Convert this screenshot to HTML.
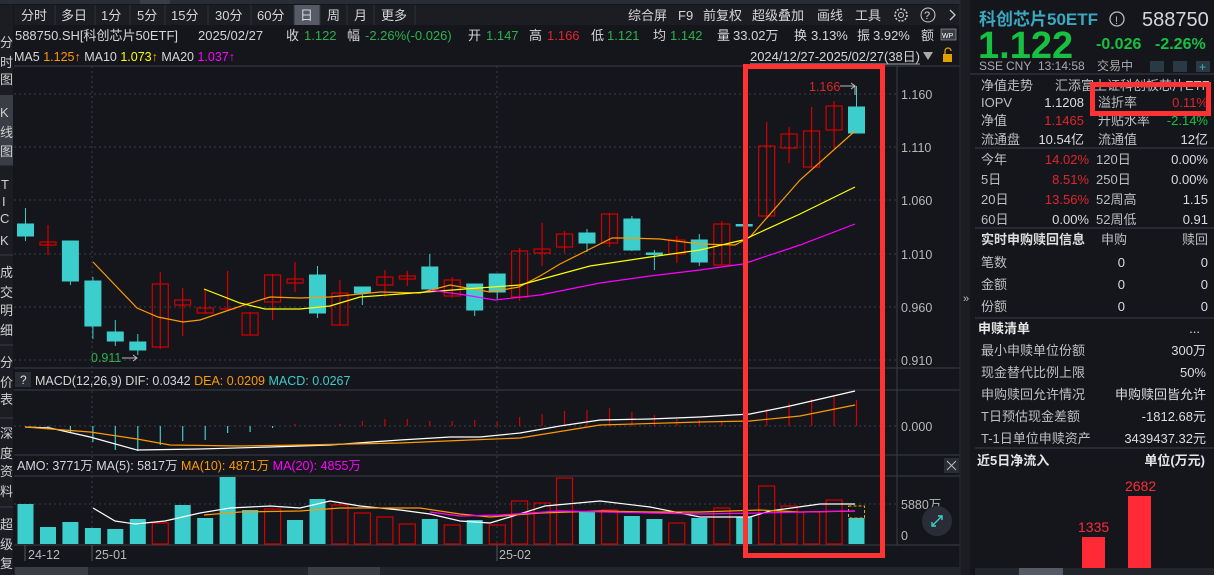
<!DOCTYPE html>
<html><head><meta charset="utf-8"><style>
html,body{margin:0;padding:0;background:#14161c;width:1214px;height:575px;overflow:hidden}
svg{display:block;font-family:"Liberation Sans","Noto Sans CJK SC",sans-serif}
</style></head><body>
<svg width="1214" height="575" viewBox="0 0 1214 575" xmlns="http://www.w3.org/2000/svg">
<rect width="1214" height="575" fill="#14161c"/>
<rect x="0" y="0" width="960" height="4" fill="#2a2d35"/>
<rect x="140" y="0" width="30" height="4" fill="#3a3e47"/>
<g font-size="13" fill="#d6d6d6">
<rect x="14" y="5" width="946" height="20" fill="#1b1d23"/>
<rect x="294" y="5" width="26" height="20" fill="#555a66"/>
<g stroke="#2f323a"><line x1="55" y1="5" x2="55" y2="25"/><line x1="95" y1="5" x2="95" y2="25"/><line x1="130" y1="5" x2="130" y2="25"/><line x1="165" y1="5" x2="165" y2="25"/><line x1="208" y1="5" x2="208" y2="25"/><line x1="251" y1="5" x2="251" y2="25"/><line x1="294" y1="5" x2="294" y2="25"/><line x1="320" y1="5" x2="320" y2="25"/><line x1="347" y1="5" x2="347" y2="25"/><line x1="374" y1="5" x2="374" y2="25"/><line x1="415" y1="5" x2="415" y2="25"/></g>
<text x="21" y="20">分时</text><text x="61" y="20">多日</text><text x="101" y="20">1分</text><text x="137" y="20">5分</text><text x="171" y="20">15分</text><text x="215" y="20">30分</text><text x="257" y="20">60分</text><text x="300" y="20">日</text><text x="327" y="20">周</text><text x="354" y="20">月</text><text x="381" y="20">更多</text>
<text x="628" y="20">综合屏</text><text x="678" y="20">F9</text><text x="703" y="20">前复权</text><text x="752" y="20">超级叠加</text><text x="817" y="20">画线</text><text x="855" y="20">工具</text>
<circle cx="901" cy="15" r="6" fill="none" stroke="#ccc" stroke-width="1.6" stroke-dasharray="2 1.4"/><circle cx="901" cy="15" r="2.5" fill="none" stroke="#ccc"/>
<circle cx="928" cy="15" r="7" fill="none" stroke="#ccc"/><text x="924" y="19" font-size="11">?</text>
<path d="M950 10 L955 15 L950 20" fill="none" stroke="#ccc" stroke-width="1.3"/>
</g>
<rect x="0" y="5" width="13" height="570" fill="#1b1d23"/>
<rect x="0" y="95" width="13" height="70" fill="#3a3d45"/>
<g stroke="#3a3d45"><line x1="0" y1="165" x2="13" y2="165"/><line x1="0" y1="255" x2="13" y2="255"/><line x1="0" y1="345" x2="13" y2="345"/><line x1="0" y1="418" x2="13" y2="418"/><line x1="0" y1="507" x2="13" y2="507"/></g>
<g font-size="13" fill="#cfcfcf">
<text x="0" y="47">分</text><text x="0" y="67">时</text><text x="0" y="84">图</text>
<text x="0" y="117">K</text><text x="0" y="137">线</text><text x="0" y="156">图</text>
<text x="1" y="189">T</text><text x="2" y="206">I</text><text x="0" y="223">C</text><text x="0" y="245">K</text>
<text x="0" y="277">成</text><text x="0" y="297">交</text><text x="0" y="315">明</text><text x="0" y="335">细</text>
<text x="0" y="367">分</text><text x="0" y="387">价</text><text x="0" y="404">表</text>
<text x="0" y="438">深</text><text x="0" y="458">度</text><text x="0" y="476">资</text><text x="0" y="496">料</text>
<text x="0" y="529">超</text><text x="0" y="549">级</text><text x="0" y="568">复</text>
</g>
<g font-size="13">
<text x="15" y="40" fill="#d6d6d6" textLength="163" lengthAdjust="spacingAndGlyphs">588750.SH[科创芯片50ETF]</text>
<text x="198" y="40" fill="#d6d6d6">2025/02/27</text>
<text x="248" y="40"><tspan fill="#d6d6d6" x="286">收</tspan><tspan fill="#2bb24c" x="304">1.122</tspan><tspan fill="#d6d6d6" x="347">幅</tspan><tspan fill="#2bb24c" x="365">-2.26%(-0.026)</tspan><tspan fill="#d6d6d6" x="468">开</tspan><tspan fill="#2bb24c" x="486">1.147</tspan><tspan fill="#d6d6d6" x="529">高</tspan><tspan fill="#e0242c" x="547">1.166</tspan><tspan fill="#d6d6d6" x="591">低</tspan><tspan fill="#2bb24c" x="607">1.121</tspan><tspan fill="#d6d6d6" x="653">均</tspan><tspan fill="#2bb24c" x="670">1.142</tspan><tspan fill="#d6d6d6" x="717">量</tspan><tspan fill="#d6d6d6" x="733">33.02万</tspan><tspan fill="#d6d6d6" x="794">换</tspan><tspan fill="#d6d6d6" x="811">3.13%</tspan><tspan fill="#d6d6d6" x="857">振</tspan><tspan fill="#d6d6d6" x="873">3.92%</tspan><tspan fill="#d6d6d6" x="921">额</tspan></text>
<rect x="941" y="29" width="15" height="11" fill="#3a3d45" stroke="#aaa" stroke-width=".6"/><text x="942" y="38" font-size="7" fill="#fff">WP</text>
<text x="14" y="61" font-size="12.5"><tspan fill="#d6d6d6">MA5 </tspan><tspan fill="#ff9900">1.125↑</tspan><tspan fill="#d6d6d6"> MA10 </tspan><tspan fill="#ffff00">1.073</tspan><tspan fill="#ff9900">↑</tspan><tspan fill="#d6d6d6"> MA20 </tspan><tspan fill="#ff00ff">1.037↑</tspan></text>
<text x="750" y="61" font-size="12.5" fill="#d6d6d6" textLength="170" lengthAdjust="spacingAndGlyphs">2024/12/27-2025/02/27(38日)</text>
<line x1="750" y1="64" x2="920" y2="64" stroke="#d6d6d6" stroke-width=".8"/>
<path d="M923 52 L933 52 L928 60Z" fill="#aaa"/>
<rect x="943" y="54" width="9" height="8" fill="#e0a000"/><path d="M945 54 V51 A3 3 0 0 1 951 51" fill="none" stroke="#e0a000" stroke-width="1.3"/>
</g>
<g stroke="#3a3d45" fill="none">
<line x1="14" y1="66" x2="960" y2="66"/>
<line x1="14" y1="368" x2="960" y2="368"/>
<line x1="14" y1="390" x2="960" y2="390"/>
<line x1="14" y1="455" x2="960" y2="455"/>
<line x1="14" y1="476" x2="960" y2="476"/>
<line x1="14" y1="545" x2="960" y2="545"/>
<line x1="897" y1="66" x2="897" y2="545"/>
<line x1="960" y1="0" x2="960" y2="575" stroke="#2a2d35"/>
</g>
<g stroke="#3c3f47" stroke-dasharray="2 3">
<line x1="14" y1="94" x2="897" y2="94"/><line x1="14" y1="147" x2="897" y2="147"/><line x1="14" y1="200" x2="897" y2="200"/><line x1="14" y1="254" x2="897" y2="254"/><line x1="14" y1="307" x2="897" y2="307"/><line x1="14" y1="360" x2="897" y2="360"/>
<line x1="14" y1="426" x2="897" y2="426"/><line x1="14" y1="504" x2="897" y2="504"/>
<line x1="92" y1="66" x2="92" y2="545"/><line x1="497" y1="66" x2="497" y2="545"/>
</g>
<g font-size="12.5" fill="#b8b8b8">
<text x="901" y="99">1.160</text><text x="901" y="152">1.110</text><text x="901" y="205">1.060</text><text x="901" y="259">1.010</text><text x="901" y="312">0.960</text><text x="901" y="365">0.910</text>
<text x="901" y="431">0.000</text><text x="901" y="509">5880万</text><text x="901" y="540">0</text>
</g>
<g stroke="#3ccdcd" fill="#3ccdcd">
<line x1="25.5" y1="208" x2="25.5" y2="241"/><rect x="17.5" y="224" width="16" height="12"/>
<line x1="70.4" y1="241" x2="70.4" y2="285"/><rect x="62.4" y="241" width="16" height="40"/>
<line x1="92.9" y1="277" x2="92.9" y2="339"/><rect x="84.9" y="281" width="16" height="45"/>
<line x1="115.3" y1="320" x2="115.3" y2="346"/><rect x="107.3" y="332" width="16" height="9"/>
<line x1="137.8" y1="334" x2="137.8" y2="355"/><rect x="129.8" y="342" width="16" height="8"/>
<line x1="317.5" y1="266" x2="317.5" y2="318"/><rect x="309.5" y="275" width="16" height="38"/>
<line x1="362.4" y1="287" x2="362.4" y2="305"/><rect x="354.4" y="287" width="16" height="6"/>
<line x1="429.8" y1="254" x2="429.8" y2="290"/><rect x="421.8" y="267" width="16" height="22"/>
<line x1="474.7" y1="284" x2="474.7" y2="316"/><rect x="466.7" y="284" width="16" height="26"/>
<line x1="497.2" y1="274" x2="497.2" y2="300"/><rect x="489.2" y="274" width="16" height="18"/>
<line x1="587" y1="229" x2="587" y2="252"/><rect x="579" y="233" width="16" height="10"/>
<line x1="631.9" y1="216" x2="631.9" y2="251"/><rect x="623.9" y="219" width="16" height="31"/>
<line x1="654.4" y1="250" x2="654.4" y2="270"/><rect x="646.4" y="253" width="16" height="1.5"/>
<line x1="699.3" y1="234" x2="699.3" y2="266"/><rect x="691.3" y="240" width="16" height="22"/>
<rect x="736.2" y="224.5" width="16" height="1.5"/>
<line x1="856.5" y1="86" x2="856.5" y2="107"/><rect x="848.5" y="107" width="16" height="26"/>
</g>
<g stroke="#d40000" fill="none" stroke-width="1.2">
<line x1="48" y1="225" x2="48" y2="255"/><rect x="40" y="242" width="16" height="3"/>
<line x1="160.3" y1="272" x2="160.3" y2="349"/><rect x="152.3" y="284" width="16" height="63"/>
<line x1="182.7" y1="288" x2="182.7" y2="336"/><rect x="174.7" y="300" width="16" height="5"/>
<line x1="205.2" y1="290" x2="205.2" y2="314"/><rect x="197.2" y="308" width="16" height="5"/>
<line x1="227.6" y1="271" x2="227.6" y2="310"/><line x1="219.6" y1="309" x2="235.6" y2="309"/>
<line x1="250.1" y1="312" x2="250.1" y2="335"/><rect x="242.1" y="313" width="16" height="22"/>
<line x1="272.6" y1="274" x2="272.6" y2="320"/><rect x="264.6" y="275" width="16" height="27"/>
<line x1="295" y1="262" x2="295" y2="292"/><rect x="287" y="279" width="16" height="4"/>
<line x1="339.9" y1="280" x2="339.9" y2="325"/><rect x="331.9" y="293" width="16" height="32"/>
<line x1="384.9" y1="270" x2="384.9" y2="297"/><rect x="376.9" y="277" width="16" height="8"/>
<line x1="407.3" y1="271" x2="407.3" y2="286"/><rect x="399.3" y="276" width="16" height="3"/>
<line x1="452.2" y1="277" x2="452.2" y2="298"/><rect x="444.2" y="280" width="16" height="16"/>
<line x1="519.6" y1="248" x2="519.6" y2="301"/><rect x="511.6" y="251" width="16" height="46"/>
<line x1="542.1" y1="223" x2="542.1" y2="266"/><rect x="534.1" y="249" width="16" height="4"/>
<line x1="564.5" y1="231" x2="564.5" y2="253"/><rect x="556.5" y="234" width="16" height="13"/>
<line x1="609.5" y1="213" x2="609.5" y2="247"/><rect x="601.5" y="214" width="16" height="29"/>
<line x1="676.8" y1="236" x2="676.8" y2="263"/><rect x="668.8" y="240" width="16" height="14"/>
<line x1="721.8" y1="221" x2="721.8" y2="265"/><rect x="713.8" y="224" width="16" height="41"/>
<line x1="766.7" y1="122" x2="766.7" y2="216"/><rect x="758.7" y="146" width="16" height="70"/>
<line x1="789.1" y1="127" x2="789.1" y2="163"/><rect x="781.1" y="134" width="16" height="14"/>
<line x1="811.6" y1="107" x2="811.6" y2="167"/><rect x="803.6" y="131" width="16" height="36"/>
<line x1="834.1" y1="101" x2="834.1" y2="148"/><rect x="826.1" y="106" width="16" height="24"/>
</g>
<g fill="none" stroke-width="1.2">
<polyline stroke="#ff9900" points="93,262 137,308 158,317 183,322 200,320 244,305 270,297 300,298 330,297 380,292 420,293 450,285 490,292 519,287 540,276 560,264 590,249 612,238 625,238 660,239 700,244 735,245 750,237 800,180 855,131"/>
<polyline stroke="#ffff00" points="204,289 240,303 265,309 300,309 330,306 360,297 400,294 440,291 465,289 520,285 590,266 650,257 700,250 743,240 800,214 855,187"/>
<polyline stroke="#ff00ff" points="430,290 465,295 495,300 540,295 600,283 650,276 700,270 743,264 800,245 855,224"/>
</g>
<text x="91" y="362" font-size="12.5" fill="#2bb24c">0.911</text>
<path d="M122 358 H137 M133 355 L137 358 L133 361" stroke="#bbb" fill="none"/>
<text x="809" y="91" font-size="12.5" fill="#e0242c">1.166</text>
<path d="M840 86 H855 V95 M851 83 L855 86 L851 89" stroke="#bbb" fill="none"/>
<rect x="15" y="372" width="16" height="15" fill="#2a2d35"/><text x="20" y="384" font-size="12" fill="#ddd">?</text>
<text x="35" y="385" font-size="12.5"><tspan fill="#d6d6d6">MACD(12,26,9)  DIF: 0.0342  </tspan><tspan fill="#ff9900">DEA: 0.0209  </tspan><tspan fill="#3ccdcd">MACD: 0.0267</tspan></text>
<g stroke="#3ccdcd" stroke-width="1.2">
<line x1="48" y1="426" x2="48" y2="428"/><line x1="70.4" y1="426" x2="70.4" y2="432"/><line x1="92.9" y1="426" x2="92.9" y2="442"/><line x1="115.3" y1="426" x2="115.3" y2="450"/><line x1="137.8" y1="426" x2="137.8" y2="451"/><line x1="160.3" y1="426" x2="160.3" y2="445"/><line x1="182.7" y1="426" x2="182.7" y2="441"/><line x1="205.2" y1="426" x2="205.2" y2="440"/><line x1="227.6" y1="426" x2="227.6" y2="433"/><line x1="250.1" y1="426" x2="250.1" y2="432"/><line x1="272.6" y1="426" x2="272.6" y2="428"/>
</g>
<g stroke="#d40000" stroke-width="1.2">
<line x1="295" y1="426" x2="295" y2="424"/><line x1="339.9" y1="426" x2="339.9" y2="424"/><line x1="362.4" y1="426" x2="362.4" y2="421"/><line x1="384.9" y1="426" x2="384.9" y2="419"/><line x1="407.3" y1="426" x2="407.3" y2="419"/><line x1="429.8" y1="426" x2="429.8" y2="421"/><line x1="452.2" y1="426" x2="452.2" y2="421"/><line x1="474.7" y1="426" x2="474.7" y2="420"/><line x1="497.2" y1="426" x2="497.2" y2="422"/><line x1="519.6" y1="426" x2="519.6" y2="417"/><line x1="542.1" y1="426" x2="542.1" y2="414"/><line x1="564.5" y1="426" x2="564.5" y2="411"/><line x1="587" y1="426" x2="587" y2="410"/><line x1="609.5" y1="426" x2="609.5" y2="408"/><line x1="631.9" y1="426" x2="631.9" y2="412"/><line x1="654.4" y1="426" x2="654.4" y2="415"/><line x1="676.8" y1="426" x2="676.8" y2="419"/><line x1="699.3" y1="426" x2="699.3" y2="420"/><line x1="721.8" y1="426" x2="721.8" y2="421"/><line x1="766.7" y1="426" x2="766.7" y2="409"/><line x1="789.1" y1="426" x2="789.1" y2="403"/><line x1="811.6" y1="426" x2="811.6" y2="399"/><line x1="834.1" y1="426" x2="834.1" y2="396"/><line x1="856.5" y1="426" x2="856.5" y2="400"/>
</g>
<polyline fill="none" stroke="#ffffff" stroke-width="1.2" points="25,427 50,428 90,437 137,450 200,449 270,447 330,445 400,440 450,437 480,437 520,433 560,426 600,420 650,419 700,417 750,414 790,406 855,391"/>
<polyline fill="none" stroke="#ff9900" stroke-width="1.2" points="25,427 90,432 137,439 170,445 240,446 300,445 400,443 470,440 520,438 600,425 700,422 750,421 800,416 855,405"/>
<text x="17" y="470" font-size="12.5"><tspan fill="#d6d6d6">AMO: 3771万  MA(5): 5817万  </tspan><tspan fill="#ff9900">MA(10): 4871万  </tspan><tspan fill="#ff00ff">MA(20): 4855万</tspan></text>
<rect x="944" y="458" width="15" height="15" fill="#2a2d35"/><path d="M947 461 L956 470 M956 461 L947 470" stroke="#bbb"/>
<g fill="#3ccdcd">
<rect x="17.5" y="504" width="16" height="40"/><rect x="40" y="527" width="16" height="17"/><rect x="62.4" y="522" width="16" height="22"/><rect x="84.9" y="528" width="16" height="16"/><rect x="107.3" y="529" width="16" height="15"/><rect x="129.8" y="519" width="16" height="25"/><rect x="174.7" y="505" width="16" height="39"/><rect x="197.2" y="518" width="16" height="26"/><rect x="219.6" y="477" width="16" height="67"/><rect x="242.1" y="510" width="16" height="34"/><rect x="287" y="520" width="16" height="24"/><rect x="309.5" y="499" width="16" height="45"/><rect x="421.8" y="519" width="16" height="25"/><rect x="466.7" y="520" width="16" height="24"/><rect x="579" y="511" width="16" height="33"/><rect x="623.9" y="516" width="16" height="28"/><rect x="646.4" y="519" width="16" height="25"/><rect x="691.3" y="518" width="16" height="26"/><rect x="736.2" y="517" width="16" height="27"/><rect x="848.5" y="518" width="16" height="26"/>
</g>
<g fill="none" stroke="#d40000" stroke-width="1.2">
<rect x="152.3" y="523" width="16" height="21"/><rect x="264.6" y="509" width="16" height="35"/><rect x="331.9" y="505" width="16" height="39"/><rect x="354.4" y="513" width="16" height="31"/><rect x="376.9" y="517" width="16" height="27"/><rect x="399.3" y="524" width="16" height="20"/><rect x="444.2" y="525" width="16" height="19"/><rect x="489.2" y="525" width="16" height="19"/><rect x="511.6" y="501" width="16" height="43"/><rect x="534.1" y="503" width="16" height="41"/><rect x="556.5" y="478" width="16" height="66"/><rect x="601.5" y="510" width="16" height="34"/><rect x="668.8" y="523" width="16" height="21"/><rect x="713.8" y="508" width="16" height="36"/><rect x="758.7" y="486" width="16" height="58"/><rect x="781.1" y="506" width="16" height="38"/><rect x="803.6" y="512" width="16" height="32"/><rect x="826.1" y="500" width="16" height="44"/>
</g>
<rect x="848.5" y="506" width="16" height="12" fill="none" stroke="#e0b000" stroke-dasharray="3 2"/>
<polyline fill="none" stroke="#ffffff" stroke-width="1.2" points="93,508 115,521 135,524 165,521 200,513 230,508 270,506 300,508 330,501 360,506 400,510 430,514 460,521 490,523 510,517 545,506 600,501 650,507 700,517 750,517 770,511 820,504 855,504"/>
<polyline fill="none" stroke="#ff9900" stroke-width="1.2" points="204,515 240,512 300,511 340,508 380,508 420,508 460,514 490,517 540,513 600,511 650,512 700,512 760,510 800,512 855,511"/>
<polyline fill="none" stroke="#ff00ff" stroke-width="1.2" points="430,512 460,516 500,515 560,511 700,514 760,513 855,511"/>
<circle cx="937" cy="521" r="15" fill="#2a2d35"/><path d="M932 526 L942 516 M938 516 H942 V520 M932 522 V526 H936" stroke="#3ccdcd" fill="none" stroke-width="1.4"/>
<g stroke="#555"><line x1="25" y1="545" x2="25" y2="561"/><line x1="92" y1="545" x2="92" y2="561"/><line x1="497" y1="545" x2="497" y2="561"/></g>
<g font-size="12.5" fill="#b8b8b8"><text x="28" y="559">24-12</text><text x="95" y="559">25-01</text><text x="499" y="559">25-02</text></g>
<rect x="14" y="567" width="946" height="8" fill="#23252c"/><rect x="15" y="567" width="73" height="8" fill="#3a3d45"/><rect x="308" y="567" width="72" height="8" fill="#3a3d45"/>
<rect x="745.5" y="66.5" width="137" height="489" fill="none" stroke="#ff3333" stroke-width="5"/>
<rect x="961" y="0" width="9" height="575" fill="#1b1d23"/>
<text x="963" y="302" font-size="11" fill="#bbb">»</text>
<text x="979" y="25" font-size="17" font-weight="bold" fill="#3aa8c0">科创芯片50ETF</text>
<circle cx="1117" cy="19" r="7" fill="none" stroke="#bbb" stroke-width="1.3"/><text x="1115" y="24" font-size="11" fill="#bbb">!</text>
<text x="1142" y="26" font-size="20" fill="#d6d6d6">588750</text>
<text x="978" y="58" font-size="38" font-weight="bold" fill="#17c040">1.122</text>
<text x="1096" y="49" font-size="16" font-weight="bold" fill="#17c040">-0.026</text>
<text x="1155" y="49" font-size="16" font-weight="bold" fill="#17c040">-2.26%</text>
<g font-size="12" fill="#aaa"><text x="979" y="70">SSE</text><text x="1006" y="70">CNY</text><text x="1038" y="70">13:14:58</text><text x="1097" y="70">交易中</text></g>
<rect x="1150" y="61" width="14" height="11" fill="#2a3a44"/><rect x="1173" y="61" width="14" height="11" fill="#2a3a44"/><rect x="1196" y="61" width="14" height="11" fill="#2a3a44"/>
<text x="1199" y="71" font-size="12" fill="#3ab0c0">+</text>
<g stroke="#3a3d45"><line x1="970" y1="74" x2="1214" y2="74"/><line x1="975" y1="148" x2="1214" y2="148"/><line x1="975" y1="228" x2="1214" y2="228"/><line x1="975" y1="318" x2="1214" y2="318"/><line x1="975" y1="448" x2="1214" y2="448"/></g>
<g font-size="13" fill="#bfbfbf">
<text x="981" y="90">净值走势</text><text x="1055" y="90">汇添富上证科创板芯片ETF</text>
<text x="981" y="107">IOPV</text><text x="1084" y="107" text-anchor="end" fill="#ddd">1.1208</text><text x="1098" y="107">溢折率</text><text x="1208" y="107" text-anchor="end" fill="#e0242c">0.11%</text>
<text x="981" y="125">净值</text><text x="1084" y="125" text-anchor="end" fill="#e0242c">1.1465</text><text x="1098" y="125">升贴水率</text><text x="1208" y="125" text-anchor="end" fill="#17c040">-2.14%</text>
<text x="981" y="144">流通盘</text><text x="1084" y="144" text-anchor="end" fill="#ddd">10.54亿</text><text x="1098" y="144">流通值</text><text x="1208" y="144" text-anchor="end" fill="#ddd">12亿</text>
<text x="981" y="164">今年</text><text x="1089" y="164" text-anchor="end" fill="#e0242c">14.02%</text><text x="1096" y="164">120日</text><text x="1208" y="164" text-anchor="end" fill="#ddd">0.00%</text>
<text x="981" y="184">5日</text><text x="1089" y="184" text-anchor="end" fill="#e0242c">8.51%</text><text x="1096" y="184">250日</text><text x="1208" y="184" text-anchor="end" fill="#ddd">0.00%</text>
<text x="981" y="204">20日</text><text x="1089" y="204" text-anchor="end" fill="#e0242c">13.56%</text><text x="1096" y="204">52周高</text><text x="1208" y="204" text-anchor="end" fill="#ddd">1.15</text>
<text x="981" y="224">60日</text><text x="1089" y="224" text-anchor="end" fill="#ddd">0.00%</text><text x="1096" y="224">52周低</text><text x="1208" y="224" text-anchor="end" fill="#ddd">0.91</text>
<text x="981" y="244" font-weight="bold" fill="#ddd">实时申购赎回信息</text><text x="1101" y="244">申购</text><text x="1208" y="244" text-anchor="end">赎回</text>
<text x="981" y="267">笔数</text><text x="1125" y="267" text-anchor="end" fill="#ddd">0</text><text x="1208" y="267" text-anchor="end" fill="#ddd">0</text>
<text x="981" y="289">金额</text><text x="1125" y="289" text-anchor="end" fill="#ddd">0</text><text x="1208" y="289" text-anchor="end" fill="#ddd">0</text>
<text x="981" y="311">份额</text><text x="1125" y="311" text-anchor="end" fill="#ddd">0</text><text x="1208" y="311" text-anchor="end" fill="#ddd">0</text>
<text x="978" y="333" font-weight="bold" fill="#e6e6e6">申赎清单</text><text x="1200" y="333" text-anchor="end" fill="#ddd">...</text>
<text x="981" y="355">最小申赎单位份额</text><text x="1206" y="355" text-anchor="end" fill="#ddd">300万</text>
<text x="981" y="377">现金替代比例上限</text><text x="1206" y="377" text-anchor="end" fill="#ddd">50%</text>
<text x="981" y="399">申购赎回允许情况</text><text x="1206" y="399" text-anchor="end" fill="#ddd">申购赎回皆允许</text>
<text x="981" y="421">T日预估现金差额</text><text x="1206" y="421" text-anchor="end" fill="#ddd">-1812.68元</text>
<text x="981" y="443">T-1日单位申赎资产</text><text x="1206" y="443" text-anchor="end" fill="#ddd">3439437.32元</text>
<text x="977" y="465" font-weight="bold" fill="#e6e6e6">近5日净流入</text><text x="1205" y="465" text-anchor="end" font-weight="bold" fill="#e6e6e6">单位(万元)</text>
</g>
<text x="1078" y="532" font-size="14" fill="#ff2a35">1335</text>
<text x="1125" y="491" font-size="14" fill="#ff2a35">2682</text>
<rect x="1082" y="537" width="23" height="38" fill="#ff2a35"/>
<rect x="1128" y="496" width="23" height="79" fill="#ff2a35"/>
<rect x="975" y="568" width="239" height="7" fill="#23252c"/><rect x="1019" y="568" width="44" height="7" fill="#555a66"/>
<rect x="1092.5" y="84.5" width="116" height="29" fill="none" stroke="#ff3333" stroke-width="5"/>
</svg>
</body></html>
